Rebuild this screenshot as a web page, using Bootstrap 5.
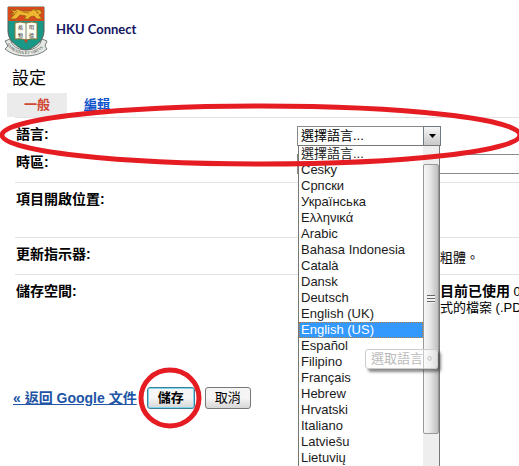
<!DOCTYPE html>
<html lang="zh-Hant">
<head>
<meta charset="utf-8">
<meta name="viewport" content="width=device-width, initial-scale=1">
<title>HKU Connect</title>
<link href="https://cdn.jsdelivr.net/npm/bootstrap@5.3.0/dist/css/bootstrap.min.css" rel="stylesheet">
<style>
body{font:13px/16px "Liberation Sans","Noto Sans CJK TC",sans-serif;color:#000;background:#fff;min-height:100vh;overflow:hidden}
.brand{font:700 13px/20px Lato,sans-serif;color:#14145f;padding-bottom:4px}
.page-title{font-size:17px;line-height:20px;margin:12px 0 4px 12px;font-weight:400}
.tabs{margin-left:7px;height:24px}
.tabs a{line-height:24px;font-weight:700;text-decoration:none}
.tabs .active{width:60px;background:#ebebeb;color:#d14836;text-align:center}
.tabs .other{margin-left:17px;color:#15c;text-decoration:underline}
.setting{border-top:1px solid #e3e3e3;margin-left:15px}
.setting .name{flex:0 0 282px;font-size:14px;font-weight:700;padding-left:1px}
.setting .behind{padding-left:143px;white-space:nowrap;overflow:hidden}
.setting .behind strong{font-size:14px}
.opening{padding-bottom:30px}
.picker{width:144px}
.picker select,.zone{display:block;appearance:none;width:100%;height:20px;border:1px solid #8a8a8a;border-radius:0;background:#fff;padding:0 3px;font:inherit;color:#000;line-height:18px}
.arrow{position:absolute;right:0;top:0;width:18px;height:20px;border:1px solid #707880;background:linear-gradient(#f5f5f5,#c9c9c9);pointer-events:none}
.choices{position:absolute;left:1px;top:19px;width:142px;z-index:5;background:#fff;border:1px solid #777;border-bottom:0}
.choices button{display:block;width:100%;height:16px;border:0;background:none;padding:0 2px;text-align:left;line-height:16px;color:#1b1b1b;white-space:nowrap}
.choices .chosen{background:#39f;color:#fff;outline:1px dotted #b67c3c;outline-offset:-1px}
.track{flex:0 0 16px;background:#eee;padding-top:18px}
.thumb{height:270px;border:1px solid #999;border-radius:2px;background:linear-gradient(90deg,#f7f7f7,#e6e6e6 45%,#bdbdbd)}
.grip{width:8px;height:8px;background:repeating-linear-gradient(#666 0 1px,#f3f3f3 1px 3px)}
.hint{position:absolute;left:68px;top:223px;z-index:6;width:73px;height:20px;line-height:18px;padding-left:5px;border:1px solid #ccc;border-radius:3px;background:rgba(255,255,255,.45);color:#bbb;box-shadow:3px 3px 3px rgba(60,60,60,.6);white-space:nowrap}
.ring{position:absolute;z-index:10;pointer-events:none;fill:none;stroke:#e61c23;stroke-width:5;overflow:visible}
.ring-row{left:-15px;top:-15px;width:100vw;height:64px}
.ring-save{left:-9px;top:-20px;width:64px;height:62px}
.actions{padding:71px 0 0 13px}
.actions a{color:#2154a5;font-size:14px;font-weight:700;margin-right:10px}
.actions button{height:22px;border-radius:3px;line-height:18px;padding:0;border:1px solid #777;background:linear-gradient(#f5f5f5 50%,#d6d6d6);color:#000}
.actions .save{width:48px;font-weight:700;border-color:#3c7f96;box-shadow:inset 0 0 0 1px #7fd6ee}
.actions .cancel{width:46px;margin-left:10px}
</style>
</head>
<body>
<header class="d-flex align-items-center ps-1 pt-1">
<svg width="44" height="53" viewBox="3 4 44 53" role="img" aria-label="HKU">
<path d="M7 7H43V31C43 41 34 47 25 51C16 47 7 41 7 31Z" fill="#199787" stroke="#54594e" stroke-width="1"/>
<path d="M7 7H43V21H7Z" fill="#d84a1c"/>
<path d="M9 9l5 2 2-2 5 2h9l3-2 6 1 2 3-3 2 3 4h-5l-3-3-4 1-1 2h-5l2-3-6-1-4 4h-6l4-4-4-1 4-1z" fill="#efb632" stroke="#8c5c14" stroke-width=".7"/>
<path d="M33 10l3 1v2h2M16 11l-3 4M22 12l6 1" fill="none" stroke="#a65a12" stroke-width=".8"/>
<path d="M14 23q5-2 11 0q6-2 11 0V39q-6-1-11 1q-5-2-11-1Z" fill="#fffef2" stroke="#8a7434"/>
<path d="M25 23V40" stroke="#7b806e"/><circle cx="25" cy="41" r="1.5" fill="#c94627"/>
<g font-family="Noto Sans CJK TC,sans-serif" font-size="5" fill="#222"><text x="17" y="29">格</text><text x="17" y="37">物</text><text x="28" y="29">明</text><text x="28" y="37">德</text></g>
<path d="M4 41L9 39Q12 50 25 50Q38 50 41 39L46 41L44 46L46 49Q38 56 25 56Q12 56 4 49L7 46Z" fill="#e5e8e3" stroke="#58625f" stroke-width=".8"/>
<path id="motto" d="M6 44Q11 54 25 54Q39 54 45 44" fill="none"/>
<text font-family="Liberation Serif,serif" font-size="4" fill="#333"><textPath href="#motto">SAPIENTIA ET VIRTVS</textPath></text>
</svg>
<span class="brand ms-2">HKU Connect</span>
</header>
<main>
<h1 class="page-title">設定</h1>
<nav class="tabs d-flex"><a class="active" href="#general">一般</a><a class="other" href="#edit">編輯</a></nav>
<section class="setting position-relative pt-2 pb-2">
<div class="d-flex">
<label class="name" for="lang">語言:</label>
<div class="picker position-relative">
<select id="lang"><option>選擇語言...</option></select>
<span class="arrow d-flex align-items-center justify-content-center"><svg width="7" height="4" viewBox="0 0 7 4"><path d="M0 0H7L3.5 4Z"/></svg></span>
<div class="choices d-flex">
<div class="flex-grow-1">
<button type="button">選擇語言...</button><button type="button">Česky</button><button type="button">Српски</button><button type="button">Українська</button><button type="button">Ελληνικά</button><button type="button">Arabic</button><button type="button">Bahasa Indonesia</button><button type="button">Català</button><button type="button">Dansk</button><button type="button">Deutsch</button><button type="button">English (UK)</button><button type="button" class="chosen">English (US)</button><button type="button">Español</button><button type="button">Filipino</button><button type="button">Français</button><button type="button">Hebrew</button><button type="button">Hrvatski</button><button type="button">Italiano</button><button type="button">Latviešu</button><button type="button">Lietuvių</button>
</div>
<div class="track"><div class="thumb d-flex align-items-center justify-content-center"><span class="grip"></span></div></div>
</div>
<span class="hint" role="tooltip">選取語言。</span>
</div>
</div>
<div class="d-flex pt-2">
<label class="name" for="zone">時區:</label>
<div class="flex-grow-1"><select class="zone border-end-0" id="zone"><option></option></select></div>
</div>
<svg class="ring ring-row" viewBox="0 0 519 64" preserveAspectRatio="none"><ellipse cx="261" cy="32" rx="259" ry="29"/></svg>
</section>
<section class="setting opening d-flex pt-2"><div class="name">項目開啟位置:</div></section>
<section class="setting d-flex pt-2 pb-2"><div class="name">更新指示器:</div><div class="behind pt-1">粗體。</div></section>
<section class="setting d-flex pt-2"><div class="name">儲存空間:</div><div class="behind"><strong>目前已使用</strong> 0<br>式的檔案 (.PDF</div></section>
<div class="actions d-flex align-items-center">
<a href="#docs">« 返回 Google 文件</a>
<div class="position-relative d-flex"><button class="save" type="submit">儲存</button><svg class="ring ring-save" viewBox="0 0 64 62"><ellipse cx="32" cy="31" rx="29" ry="28"/></svg></div>
<button class="cancel" type="button">取消</button>
</div>
</main>
<script src="https://cdn.jsdelivr.net/npm/bootstrap@5.3.0/dist/js/bootstrap.bundle.min.js"></script>
</body>
</html>
